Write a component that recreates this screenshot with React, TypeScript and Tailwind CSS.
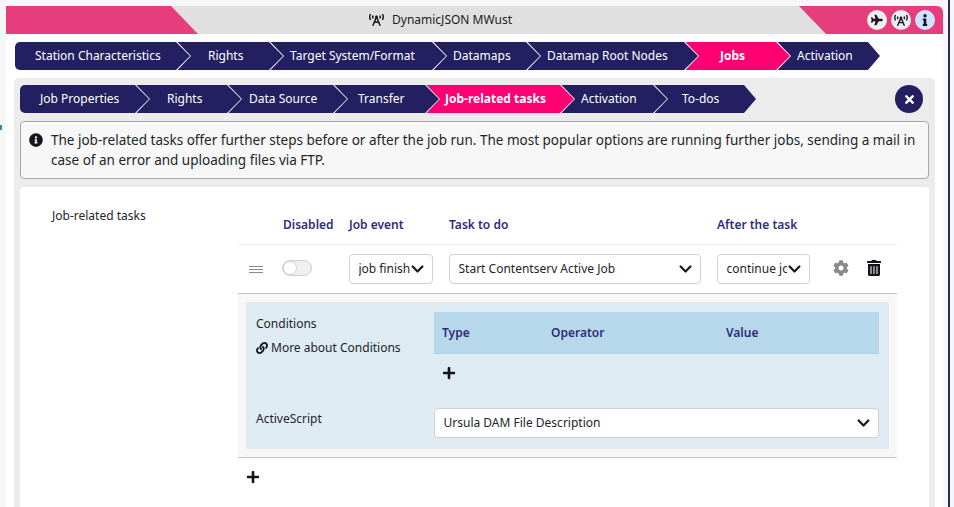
import React from "react";
import { FaPlane, FaBroadcastTower, FaInfo, FaTimes, FaInfoCircle, FaLink, FaCog, FaTrashAlt, FaPlus } from "react-icons/fa";

const outerSteps = [
  { label: "Station Characteristics", cls: "w-[175px] pl-[20px] rounded-l-[5px] [clip-path:polygon(0_0,calc(100%-14px)_0,100%_50%,calc(100%-14px)_100%,0_100%)]" },
  { label: "Rights", cls: "w-[105.5px] pl-[30.5px] -ml-[12.5px] [clip-path:polygon(0_0,calc(100%-14px)_0,100%_50%,calc(100%-14px)_100%,0_100%,13.5px_50%)]" },
  { label: "Target System/Format", cls: "w-[175.5px] pl-[19.5px] -ml-[12.5px] [clip-path:polygon(0_0,calc(100%-14px)_0,100%_50%,calc(100%-14px)_100%,0_100%,13.5px_50%)]" },
  { label: "Datamaps", cls: "w-[106.5px] pl-[19.5px] -ml-[12.5px] [clip-path:polygon(0_0,calc(100%-14px)_0,100%_50%,calc(100%-14px)_100%,0_100%,13.5px_50%)]" },
  { label: "Datamap Root Nodes", cls: "w-[170.5px] pl-[19.5px] -ml-[12.5px] [clip-path:polygon(0_0,calc(100%-14px)_0,100%_50%,calc(100%-14px)_100%,0_100%,13.5px_50%)]" },
  { label: "Jobs", active: true, cls: "w-[104.5px] pl-[34.5px] -ml-[12.5px] [clip-path:polygon(0_0,calc(100%-14px)_0,100%_50%,calc(100%-14px)_100%,0_100%,13.5px_50%)]" },
  { label: "Activation", cls: "w-[102.5px] pl-[19.5px] -ml-[12.5px] [clip-path:polygon(0_0,calc(100%-12px)_0,100%_50%,calc(100%-12px)_100%,0_100%,13.5px_50%)]" },
];

const innerSteps = [
  { label: "Job Properties", cls: "w-[129px] pl-[20px] rounded-l-[5px] [clip-path:polygon(0_0,calc(100%-14px)_0,100%_50%,calc(100%-14px)_100%,0_100%)]" },
  { label: "Rights", cls: "w-[104.5px] pl-[30.5px] -ml-[12.5px] [clip-path:polygon(0_0,calc(100%-14px)_0,100%_50%,calc(100%-14px)_100%,0_100%,13.5px_50%)]" },
  { label: "Data Source", cls: "w-[118.5px] pl-[20.5px] -ml-[12.5px] [clip-path:polygon(0_0,calc(100%-14px)_0,100%_50%,calc(100%-14px)_100%,0_100%,13.5px_50%)]" },
  { label: "Transfer", cls: "w-[104.5px] pl-[23.5px] -ml-[12.5px] [clip-path:polygon(0_0,calc(100%-14px)_0,100%_50%,calc(100%-14px)_100%,0_100%,13.5px_50%)]" },
  { label: "Job-related tasks", active: true, cls: "w-[147.5px] pl-[18.5px] -ml-[12.5px] [clip-path:polygon(0_0,calc(100%-14px)_0,100%_50%,calc(100%-14px)_100%,0_100%,13.5px_50%)]" },
  { label: "Activation", cls: "w-[105.5px] pl-[19.5px] -ml-[12.5px] [clip-path:polygon(0_0,calc(100%-14px)_0,100%_50%,calc(100%-14px)_100%,0_100%,13.5px_50%)]" },
  { label: "To-dos", cls: "w-[101.5px] pl-[27.5px] -ml-[12.5px] [clip-path:polygon(0_0,calc(100%-12px)_0,100%_50%,calc(100%-12px)_100%,0_100%,13.5px_50%)]" },
];

type Step = { label: string; cls: string; active?: boolean };

function Steps({ items }: { items: Step[] }) {
  return (
    <div className="flex h-[28px]">
      {items.map((s) => (
        <div
          key={s.label}
          className={`${s.cls} flex h-[28px] shrink-0 items-center whitespace-nowrap text-[12px] text-white ${s.active ? "bg-[#ff0073] font-bold" : "bg-[#231f60]"}`}
        >
          {s.label}
        </div>
      ))}
    </div>
  );
}

function Chevron() {
  return (
    <svg viewBox="0 0 16 16" className="pointer-events-none absolute right-[9px] top-1/2 h-[13px] w-[13px] -translate-y-1/2" fill="none">
      <path d="m2 5 6 6 6-6" stroke="#1a1a1a" strokeWidth="2.8" strokeLinecap="round" strokeLinejoin="round" />
    </svg>
  );
}

function Select({ value, cls }: { value: string; cls: string }) {
  return (
    <div className={`relative h-[30px] ${cls}`}>
      <select
        defaultValue={value}
        className="h-full w-full appearance-none rounded-[4px] border border-[#cfd2d4] bg-white pl-[8.5px] pr-[22px] text-[12px] text-[#212529] outline-none"
      >
        <option>{value}</option>
      </select>
      <Chevron />
    </div>
  );
}

function IconDot({ children, cls }: { children: React.ReactNode; cls: string }) {
  return <div className={`flex h-[20px] w-[20px] items-center justify-center rounded-full text-[#16162a] ${cls}`}>{children}</div>;
}

export default function App() {
  return (
    <div className="relative flex h-[507px] w-full overflow-hidden bg-[#f6f7f8] font-['Noto_Sans',sans-serif] text-[#212529]">
      <div className="absolute left-0 top-[125px] h-[5px] w-[1.5px] bg-[#3b82c4]" />
      <div className="w-[6px] shrink-0" />

      <div className="mt-[6px] flex w-[937px] shrink-0 flex-col rounded-tr-[6px] bg-white">
        <div className="flex h-[28px] shrink-0 items-center justify-between overflow-hidden rounded-tr-[6px] bg-[#e0e0e0]">
          <div className="h-full w-[192px] shrink-0 bg-[#e63e7c] [clip-path:polygon(0_0,165px_0,100%_100%,0_100%)]" />
          <div className="flex flex-1 items-center gap-[8px] pl-[171px] text-[12px] text-[#1c1c1c]">
            <FaBroadcastTower className="h-[12px] w-[15px]" />
            <span>DynamicJSON MWust</span>
          </div>
          <div className="flex h-full w-[144px] shrink-0 items-center justify-end gap-[4px] bg-[#e63e7c] pr-[8px] [clip-path:polygon(0_0,100%_0,100%_100%,27px_100%)]">
            <IconDot cls="bg-[#eeeeee]"><FaPlane className="h-[12px] w-[12px]" /></IconDot>
            <IconDot cls="bg-[#eeeeee]"><FaBroadcastTower className="h-[11px] w-[14px]" /></IconDot>
            <IconDot cls="bg-[#cfe2ff]"><FaInfo className="h-[12px] w-[12px]" /></IconDot>
          </div>
        </div>

        <div className="mt-[8px] pl-[9px]">
          <Steps items={outerSteps} />
        </div>

        <div className="mx-[8px] mt-[8px] flex flex-1 flex-col rounded-t-[5px] bg-[#ececec] pt-[7px]">
          <div className="flex items-center justify-between pl-[6px] pr-[12px]">
            <Steps items={innerSteps} />
            <div className="flex h-[28px] w-[28px] items-center justify-center rounded-full bg-[#231f60] text-white">
              <FaTimes className="h-[13px] w-[13px]" />
            </div>
          </div>

          <div className="mx-[6px] mt-[8px] flex h-[58px] gap-[8px] rounded-[4px] border border-[#a8a8a8] bg-[#f7f7f7] pl-[8px] pr-[8px] pt-[8px] text-[13.5px] leading-[20px] text-[#212529]">
            <FaInfoCircle className="mt-[3px] h-[14px] w-[14px] shrink-0 text-[#14141f]" />
            <p>
              The job-related tasks offer further steps before or after the job run. The most popular options are running further jobs, sending a mail in case of an error and uploading files via FTP.
            </p>
          </div>

          <div className="mx-[6px] mt-[8px] flex flex-1 rounded-t-[4px] bg-white">
            <div className="w-[218px] shrink-0 pl-[32px] pt-[20px] text-[12px] leading-[18px]">Job-related tasks</div>

            <div className="w-[659px] shrink-0 pt-[28px]">
              <div className="grid h-[30px] grid-cols-[45px_66px_100px_268px_1fr] border-b border-[#f0f0f0] pb-[10px] text-[12px] font-semibold leading-[20px] text-[#2f2c7e]">
                <div />
                <div>Disabled</div>
                <div>Job event</div>
                <div>Task to do</div>
                <div>After the task</div>
              </div>

              <div className="grid h-[49px] grid-cols-[45px_66px_100px_268px_1fr] items-center border-b border-[#c6c6c6]">
                <div className="flex flex-col gap-[2px] pl-[11px]">
                  <div className="h-px w-[14px] bg-[#8a8a8a]" />
                  <div className="h-px w-[14px] bg-[#8a8a8a]" />
                  <div className="h-px w-[14px] bg-[#8a8a8a]" />
                </div>
                <div className="-mt-[2px] flex h-[16px] w-[30px] -translate-x-px items-center rounded-full border border-[#cdcdcd] bg-[#efefef]">
                  <div className="h-[14px] w-[14px] rounded-full border border-[#d5d5d5] bg-white" />
                </div>
                <Select value="job finish" cls="w-[84px]" />
                <Select value="Start Contentserv Active Job" cls="w-[252px]" />
                <div className="flex items-center">
                  <Select value="continue job" cls="w-[93px]" />
                  <FaCog className="-mt-[2px] ml-[23px] h-[16px] w-[16px] text-[#8a8a8a]" />
                  <FaTrashAlt className="-mt-[2px] ml-[18px] h-[16px] w-[14px] text-[#14141f]" />
                </div>
              </div>

              <div className="h-[164px] border-b border-[#c6c6c6] bg-[#f7f7f7] p-[8px]">
                <div className="flex h-[147px] bg-[#dfebf3] pl-[10px] pr-[10px] pt-[10px] text-[12px]">
                  <div className="w-[178px] shrink-0">
                    <div className="mt-[3px] leading-[18px]">Conditions</div>
                    <div className="mt-[6px] flex items-center gap-[3px] leading-[18px]">
                      <FaLink className="h-[12px] w-[12px] text-[#14141f]" />
                      <span>More about Conditions</span>
                    </div>
                    <div className="mt-[53px] leading-[18px]">ActiveScript</div>
                  </div>
                  <div className="flex-1">
                    <div className="grid h-[42px] grid-cols-[109px_175px_1fr] items-center border-b border-[#abcfe5] bg-[#b7d7ea] pl-[8px] font-semibold text-[#2f2c7e]">
                      <div>Type</div>
                      <div>Operator</div>
                      <div>Value</div>
                    </div>
                    <div className="pl-[8px] pt-[12px]">
                      <FaPlus className="h-[14px] w-[14px] text-[#14141f]" />
                    </div>
                    <Select value="Ursula DAM File Description" cls="mt-[28px] w-full" />
                  </div>
                </div>
              </div>

              <div className="pl-[8px] pt-[12px]">
                <FaPlus className="h-[14px] w-[14px] text-[#14141f]" />
              </div>
            </div>
          </div>
        </div>
      </div>

      <div className="w-[5px] shrink-0" />
      <div className="w-[2px] shrink-0 bg-[#2b2a55]" />
      <div className="flex-1" />
    </div>
  );
}
